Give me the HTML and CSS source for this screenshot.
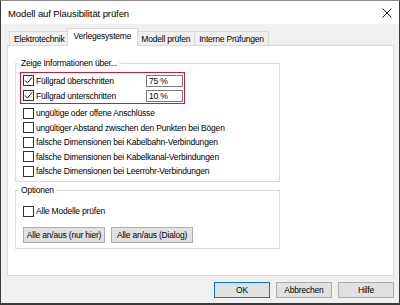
FILE: index.html
```html
<!DOCTYPE html>
<html lang="de">

<head>
    <meta charset="UTF-8">
    <title>Modell auf Plausibilität prüfen</title>
    <link rel="stylesheet" href="styles.css">
</head>

<body>
    <div class="dialog">
        <div class="titlebar">
            <span class="title">Modell auf Plausibilität prüfen</span>
            <svg class="close" viewBox="0 0 10 10">
                <path d="M0.5 0.5 L9.5 9.5 M9.5 0.5 L0.5 9.5" stroke="#1e1e1e" stroke-width="1" fill="none" />
            </svg>
        </div>

        <div class="tabs">
            <div class="tab">Elektrotechnik</div>
            <div class="tab active">Verlegesysteme</div>
            <div class="tab">Modell prüfen</div>
            <div class="tab">Interne Prüfungen</div>
        </div>

        <div class="panel">
            <fieldset class="group group-info">
                <legend>Zeige Informationen über...</legend>
                <div class="highlight">
                    <div class="row">
                        <span class="check"><svg viewBox="0 0 9 9"><path d="M1 4.5 L3.5 7 L8 1.5" stroke="#1e1e1e" stroke-width="1" fill="none" /></svg></span>
                        <span>Füllgrad überschritten</span>
                        <span class="field">75 %</span>
                    </div>
                    <div class="row">
                        <span class="check"><svg viewBox="0 0 9 9"><path d="M1 4.5 L3.5 7 L8 1.5" stroke="#1e1e1e" stroke-width="1" fill="none" /></svg></span>
                        <span>Füllgrad unterschritten</span>
                        <span class="field">10 %</span>
                    </div>
                </div>
                <div class="list">
                    <div class="row"><span class="check"></span><span>ungültige oder offene Anschlüsse</span></div>
                    <div class="row"><span class="check"></span><span>ungültiger Abstand zwischen den Punkten bei Bögen</span></div>
                    <div class="row"><span class="check"></span><span>falsche Dimensionen bei Kabelbahn-Verbindungen</span></div>
                    <div class="row"><span class="check"></span><span>falsche Dimensionen bei Kabelkanal-Verbindungen</span></div>
                    <div class="row"><span class="check"></span><span>falsche Dimensionen bei Leerrohr-Verbindungen</span></div>
                </div>
            </fieldset>

            <fieldset class="group group-options">
                <legend>Optionen</legend>
                <div class="row"><span class="check"></span><span>Alle Modelle prüfen</span></div>
                <div class="option-buttons">
                    <button class="btn wide">Alle an/aus (nur hier)</button>
                    <button class="btn wide">Alle an/aus (Dialog)</button>
                </div>
            </fieldset>
        </div>

        <div class="footer">
            <button class="btn default">OK</button>
            <button class="btn">Abbrechen</button>
            <button class="btn">Hilfe</button>
        </div>
    </div>
</body>
</html>
```

FILE: styles.css
```css
body {
    margin: 0;
    font-family: "Liberation Sans", Arial, sans-serif;
    font-size: 8.5px;
    letter-spacing: -0.2px;
    color: #000;
}

.dialog {
    width: 400px;
    height: 305px;
    box-sizing: border-box;
    border: 1px solid #3a3a3a;
    border-top-color: #8a8a8a;
    border-bottom-width: 2px;
    background-color: #f0f0f0;
    display: flex;
    flex-direction: column;
}

.titlebar {
    height: 23px;
    flex: none;
    background-color: #fff;
    display: flex;
    align-items: center;
    justify-content: space-between;
    padding: 1px 7px 0 7px;
    box-sizing: border-box;
}

.title {
    font-size: 9.5px;
    letter-spacing: -0.1px;
}

.close {
    width: 10px;
    height: 10px;
}

.tabs {
    display: flex;
    align-items: flex-end;
    height: 17px;
    flex: none;
    margin-top: 4px;
    padding-left: 8px;
}

.tab {
    height: 14px;
    box-sizing: border-box;
    border: 1px solid #d9d9d9;
    border-bottom: none;
    margin-right: -1px;
    padding: 0 4px;
    display: flex;
    align-items: center;
    background-color: #f0f0f0;
}

.tab.active {
    height: 18px;
    margin: 0 -2px -1px -2px;
    padding: 0 6px 3px 6px;
    background-color: #fff;
    position: relative;
    z-index: 1;
}

.panel {
    height: 231px;
    flex: none;
    box-sizing: border-box;
    margin: 0 5px 0 6px;
    border: 1px solid #d9d9d9;
    background-color: #fff;
    padding-left: 7px;
}

.group {
    width: 265px;
    min-width: 0;
    box-sizing: border-box;
    margin: 0;
    border: 1px solid #dcdcdc;
    padding: 4px 3px 0 3px;
}

legend {
    padding: 0 2px;
    line-height: 10px;
}

.group-info {
    margin-top: 12px;
    padding-bottom: 2.5px;
}

.group-options {
    margin-top: 3px;
    padding: 9px 3px 5px 7px;
}

.group-options legend {
    margin-left: -4px;
}

.row {
    display: flex;
    align-items: center;
}

.check {
    width: 11px;
    height: 11px;
    flex: none;
    box-sizing: border-box;
    border: 1px solid #333;
    background-color: #fff;
    margin-right: 2px;
    display: flex;
    align-items: center;
    justify-content: center;
}

.check svg {
    width: 9px;
    height: 9px;
}

.highlight {
    width: 165px;
    box-sizing: border-box;
    margin-left: 1px;
    border: 1px solid #c0223b;
    padding: 1px 1px 1px 2px;
    display: flex;
    flex-direction: column;
    gap: 2px;
}

.highlight .row {
    height: 13px;
}

.field {
    width: 37px;
    height: 12px;
    box-sizing: border-box;
    margin-left: auto;
    border: 1px solid #7a7a7a;
    padding-left: 2px;
    display: flex;
    align-items: center;
}

.list {
    margin-top: 2px;
    padding-left: 4px;
}

.list .row {
    height: 14.5px;
}

.group-options .row {
    height: 14px;
}

.option-buttons {
    display: flex;
    gap: 6px;
    margin-top: 9px;
}

.btn {
    width: 56px;
    height: 16px;
    box-sizing: border-box;
    border: 1px solid #adadad;
    background-color: #e1e1e1;
    font: inherit;
    letter-spacing: inherit;
    color: #000;
    padding: 0;
}

.btn.wide {
    width: 82px;
}

.btn.default {
    border-color: #0078d7;
}

.footer {
    display: flex;
    justify-content: flex-end;
    gap: 6px;
    padding: 6px 5px 0 0;
}
```
